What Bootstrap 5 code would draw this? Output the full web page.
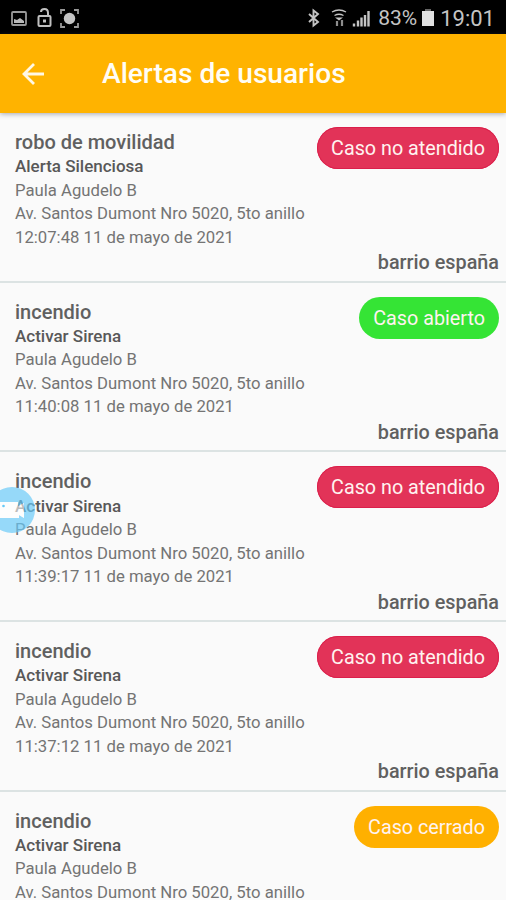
<!DOCTYPE html>
<html lang="es">
<head>
<meta charset="utf-8">
<meta name="viewport" content="width=device-width, initial-scale=1">
<title>Alertas de usuarios</title>
<link href="https://cdn.jsdelivr.net/npm/bootstrap@5.3.0/dist/css/bootstrap.min.css" rel="stylesheet">
<style>
body { font-family: Roboto, "Liberation Sans", sans-serif; background: #fafafa; color: #747474; height: 900px; }
.status-strip { height: 34px; background: #000; color: #c4c4c4; font-size: 21px; padding: 3px 11px 0 10px; }
.status-strip svg { display: block; }
.clock { font-size: 22px; margin-left: 5px; }
.app-bar { height: 79px; background: #ffb300; box-shadow: 0 1px 5px rgba(60,65,85,.45); z-index: 2; padding: 1px 0 0 20px; }
.app-title { font-size: 28.1px; font-weight: 500; margin-left: 55px; color: #fffdf5; line-height: 1; padding-top: 1px; }
.alert-item { height: 169.65px; padding: 16px 7px 0 15px; border-bottom: 2px solid #dce3e3; font-size: 16.72px; line-height: 23.5px; }
.alert-item:last-child { height: 109px; border: 0; }
.alert-item h2 { font-size: 20px; font-weight: 500; line-height: 26.3px; color: #606060; }
.kind { font-size: 17px; font-weight: 500; color: #585858; }
.place { font-size: 19.8px; font-weight: 500; line-height: 28px; color: #606060; }
.state { height: 42px; line-height: 44px; margin-top: -2px; padding: 0 14px; font-size: 19.75px; color: #fff3f0; }
.missed { background: #e23358; box-shadow: inset 0 0 0 1px #db1f4b; }
.open { background: #35e435; }
.closed { background: #ffb000; }
.bubble { left: -13px; top: 487px; z-index: 3; }
</style>
</head>
<body class="position-relative d-flex flex-column overflow-hidden">
<header class="status-strip d-flex align-items-center justify-content-between flex-shrink-0">
  <svg width="72" height="26" viewBox="0 0 72 26" fill="none" stroke="#999" stroke-width="1.800">
    <rect x="2" y="6" width="14" height="13" rx="1"/><path d="M4 17v-4l3 1 3-2 4 3v2z" fill="#bbb" stroke="none"/>
    <g stroke="#c0c0c0" stroke-width="2"><rect x="28.500" y="10" width="12" height="10" rx="1"/><path d="M31 6q0-3 3.500-3t3.500 4v3"/><path d="M34.500 13.500v3" stroke-width="3"/></g>
    <circle cx="59.500" cy="12.500" r="5.700" fill="#c4c4c4" stroke="none"/>
    <path d="M51 8V4h4M64 4h4v4M68 17v4h-4M55 21h-4v-4" stroke="#999"/>
  </svg>
  <div class="d-flex align-items-center">
    <svg width="72" height="24" viewBox="0 0 72 24" fill="none" stroke="#c4c4c4" stroke-width="1.900">
      <path d="M3 7l9 8-4.500 3.500V3.500L12 7l-9 8"/>
      <path d="M26 5q7-4 14 0M28.500 8.500q4.500-2.500 9 0" stroke-width="1.400"/><path d="M29 10.500h8l-4 3z" fill="#c4c4c4" stroke="none"/><path d="M31 14v5M36 13v6" stroke="#8d8d8d" stroke-width="2.200"/>
      <path d="M48 19.500v-3M52 19.500v-6M55.500 19.500v-9M59 19.500V8M62.500 19.500V4" stroke-width="2.400"/>
    </svg>
    <span>83%</span>
    <svg width="14" height="20" viewBox="0 0 14 20" class="ms-1"><path d="M1 2h12v15H1z" fill="#e0e0e0"/><path d="M4 0h6v2H4z" fill="#666"/></svg>
    <span class="clock">19:01</span>
  </div>
</header>
<nav class="app-bar position-relative d-flex align-items-center flex-shrink-0">
  <svg width="27" height="26" viewBox="0 0 27 26" fill="none" stroke="#fff8e5" stroke-width="2.800"><path d="M24 13H4M14 3L4 13l10 10"/></svg>
  <h1 class="app-title mb-0">Alertas de usuarios</h1>
</nav>
<main class="flex-grow-1 overflow-hidden">
  <article class="alert-item">
    <div class="d-flex justify-content-between align-items-start">
      <div><h2 class="mb-0">robo de movilidad</h2><div class="kind">Alerta Silenciosa</div><div>Paula Agudelo B</div><div>Av. Santos Dumont Nro 5020, 5to anillo</div><div>12:07:48 11 de mayo de 2021</div></div>
      <span class="state missed rounded-pill text-nowrap">Caso no atendido</span>
    </div>
    <div class="place text-end">barrio españa</div>
  </article>
  <article class="alert-item">
    <div class="d-flex justify-content-between align-items-start">
      <div><h2 class="mb-0">incendio</h2><div class="kind">Activar Sirena</div><div>Paula Agudelo B</div><div>Av. Santos Dumont Nro 5020, 5to anillo</div><div>11:40:08 11 de mayo de 2021</div></div>
      <span class="state open rounded-pill text-nowrap">Caso abierto</span>
    </div>
    <div class="place text-end">barrio españa</div>
  </article>
  <article class="alert-item">
    <div class="d-flex justify-content-between align-items-start">
      <div><h2 class="mb-0">incendio</h2><div class="kind">Activar Sirena</div><div>Paula Agudelo B</div><div>Av. Santos Dumont Nro 5020, 5to anillo</div><div>11:39:17 11 de mayo de 2021</div></div>
      <span class="state missed rounded-pill text-nowrap">Caso no atendido</span>
    </div>
    <div class="place text-end">barrio españa</div>
  </article>
  <article class="alert-item">
    <div class="d-flex justify-content-between align-items-start">
      <div><h2 class="mb-0">incendio</h2><div class="kind">Activar Sirena</div><div>Paula Agudelo B</div><div>Av. Santos Dumont Nro 5020, 5to anillo</div><div>11:37:12 11 de mayo de 2021</div></div>
      <span class="state missed rounded-pill text-nowrap">Caso no atendido</span>
    </div>
    <div class="place text-end">barrio españa</div>
  </article>
  <article class="alert-item">
    <div class="d-flex justify-content-between align-items-start">
      <div><h2 class="mb-0">incendio</h2><div class="kind">Activar Sirena</div><div>Paula Agudelo B</div><div>Av. Santos Dumont Nro 5020, 5to anillo</div></div>
      <span class="state closed rounded-pill text-nowrap">Caso cerrado</span>
    </div>
  </article>
</main>
<svg class="bubble position-absolute" width="50" height="48" viewBox="0 0 50 48">
  <path fill-rule="evenodd" d="M2 23a23 23 0 1 0 46 0a23 23 0 1 0-46 0M10 15h21v4l6-3v15l-5-3v3H10z" fill="#65c9f8" fill-opacity=".68"/>
  <path d="M10 15h21v4l6-3v15l-5-3v3H10z" fill="#fff" fill-opacity=".6"/><circle cx="16.500" cy="19" r="1.300" fill="#65c9f8"/>
</svg>
<script src="https://cdn.jsdelivr.net/npm/bootstrap@5.3.0/dist/js/bootstrap.bundle.min.js"></script>
</body>
</html>
